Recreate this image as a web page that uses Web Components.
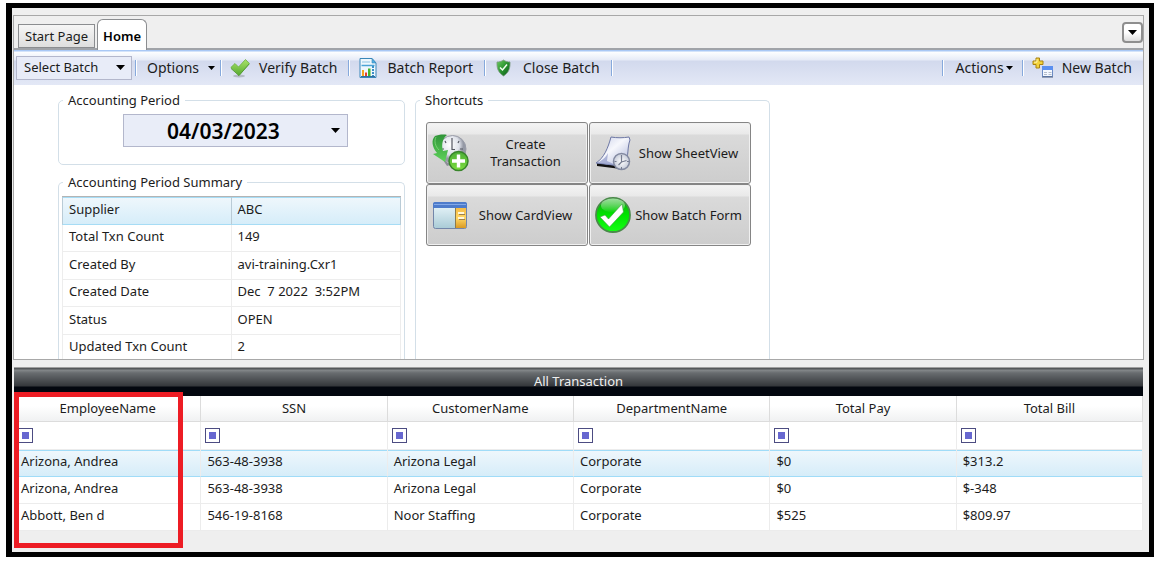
<!DOCTYPE html>
<html lang="en">
<head>
<meta charset="utf-8">
<meta name="viewport" content="width=device-width, initial-scale=1">
<title>Home - Accounting Period</title>
<style>
body {
  background: #fff;
  color: #1c1c1c;
  font: 13px/17px "Noto Sans", "Open Sans", sans-serif;
  margin: 0;
}
</style>
</head>
<body>
<batch-app>
  <tab-strip slot="tabs"></tab-strip>
  <tool-bar slot="toolbar">
    <batch-select></batch-select>
    <tool-button menu>Options</tool-button>
    <tool-button><ui-icon slot="icon" name="verify"></ui-icon>Verify Batch</tool-button>
    <tool-button><ui-icon slot="icon" name="report"></ui-icon>Batch Report</tool-button>
    <tool-button><ui-icon slot="icon" name="shield"></ui-icon>Close Batch</tool-button>
    <tool-button slot="end" menu tight>Actions</tool-button>
    <tool-button slot="end" last><ui-icon slot="icon" name="new"></ui-icon>New Batch</tool-button>
  </tool-bar>
  <group-box label="Accounting Period" slot="period"><period-picker></period-picker></group-box>
  <group-box label="Accounting Period Summary" slot="summary"><summary-table></summary-table></group-box>
  <group-box label="Shortcuts" slot="shortcuts">
    <shortcut-grid>
      <shortcut-button><ui-icon slot="icon" name="create"></ui-icon>Create Transaction</shortcut-button>
      <shortcut-button><ui-icon slot="icon" name="sheet"></ui-icon>Show SheetView</shortcut-button>
      <shortcut-button><ui-icon slot="icon" name="card"></ui-icon>Show CardView</shortcut-button>
      <shortcut-button><ui-icon slot="icon" name="form"></ui-icon>Show Batch Form</shortcut-button>
    </shortcut-grid>
  </group-box>
  <transaction-grid slot="grid"></transaction-grid>
</batch-app>

<script>
const ICONS = {
  arrow: [9, 5, '<path d="M0 0h9L4.500 5z" fill="#000"/>'],
  verify: [20, 20, `
    <defs><linearGradient id="g" x2="0" y2="1"><stop stop-color="#a9e368"/><stop offset="1" stop-color="#56aa30"/></linearGradient></defs>
    <ellipse cx="9" cy="18" rx="6" ry="1.500" fill="#9aa0a8" opacity=".6"/>
    <path d="M.8 9.500L5 5.500l3.500 3.500L15.500 1.500l3.900 4L9 17.500z" fill="url(#g)" stroke="#6bb043" stroke-width=".8" stroke-linejoin="round"/>
    <path d="M1 10.500L9 17.500 19.200 6" fill="none" stroke="#4a9429" stroke-width=".8" stroke-linejoin="round"/>`],
  report: [18, 20, `
    <path d="M1 .5h12L17 5v14.500H1z" fill="#eef7fd" stroke="#3a87b8"/>
    <path d="M13 .5V5h4z" fill="#4fb0e4" stroke="#3a87b8" stroke-width=".6"/>
    <path d="M3 4h8" stroke="#8fc3e4"/>
    <path d="M2.500 7.500h13" stroke="#4aa3d6" stroke-width="1.500"/>
    <path d="M14 8v10" stroke="#3b8fc7" stroke-width="2" stroke-dasharray="2 1"/>
    <path d="M3 12h2v6H3z" fill="#f5a51d"/><path d="M6 14.500h2V18H6z" fill="#e8402c"/><path d="M9 10.500h2.500V18H9z" fill="#46b52c"/>
    <path d="M2 18.500h14" stroke="#2f6f9f"/>`],
  shield: [15, 18, `
    <defs><linearGradient id="g" x2="1" y2="1"><stop stop-color="#6fce62"/><stop offset=".5" stop-color="#2a9330"/><stop offset="1" stop-color="#0b5a1a"/></linearGradient></defs>
    <path d="M7.500 1C9.500 2.500 12 3 14 3c.3 6-1 10.500-6.500 14C2 13.500.7 9 1 3c2 0 4.500-.5 6.500-2z" fill="url(#g)" stroke="#7f9a84" stroke-width=".8"/>
    <path d="M4 8.500L6.500 11 11 5.500" fill="none" stroke="#f4fff4" stroke-width="1.500"/>`],
  new: [21, 21, `
    <path d="M4 1h3.500v3H11v3.500H7.500V11H4V7.500H1V4h3z" fill="#f3d33c" stroke="#a98212"/>
    <path d="M5 2.200v3H2.200" fill="none" stroke="#fff6ae"/>
    <path d="M10.500 9.500h10v10h-10z" fill="#f4f8ff" stroke="#6c8cc4"/>
    <path d="M10 9h11v4H10z" fill="#5b8ff0"/>
    <path d="M12 15h3v1h-3zM16.500 15h3v1h-3zM12 17h3v1h-3zM16.500 17h3v1h-3z" fill="#b3bccb"/>
    <path d="M10 20h11" stroke="#4b5d7d"/>`],
  create: [38, 38, `
    <defs>
      <radialGradient id="a" cx=".4" cy=".35"><stop stop-color="#fff"/><stop offset=".7" stop-color="#dfe2ea"/><stop offset="1" stop-color="#9599a5"/></radialGradient>
      <linearGradient id="b" x2="0" y2="1"><stop stop-color="#2f9438"/><stop offset="1" stop-color="#5fd35b"/></linearGradient>
      <linearGradient id="c" x2="0" y2="1"><stop stop-color="#4cae38"/><stop offset="1" stop-color="#7bdc3d"/></linearGradient>
    </defs>
    <path d="M8 20l9 9 14-13-3 12-12 4z" fill="#8c8e98"/>
    <circle cx="21.500" cy="15" r="13.500" fill="url(#a)" stroke="#999ca8"/>
    <path d="M21 4v12M21 15.500h3M11 15h2M29 15h3M14 7l1 2M28 7l-1 2" stroke="#555862" stroke-width="1.200"/>
    <path d="M16 1C12 4 10 10 12 17l5-1-3 12L2 20l4-1C1 13 0 6 4 2c3-1 8-2 12-1z" fill="url(#b)"/>
    <path d="M5 3c-2 4-1 9 3 13" fill="none" stroke="#8be184" opacity=".7"/>
    <circle cx="27.500" cy="27" r="9.500" fill="url(#c)" stroke="#38852b" stroke-width="1.500"/>
    <path d="M27.500 20.500v13M21 27h13" stroke="#fff" stroke-width="3.400"/>`],
  sheet: [38, 38, `
    <defs>
      <linearGradient id="a" x2="1" y2="1"><stop stop-color="#c4cbe6"/><stop offset=".45" stop-color="#f6f7fc"/><stop offset="1" stop-color="#a9b2d8"/></linearGradient>
      <radialGradient id="b"><stop stop-color="#fff"/><stop offset="1" stop-color="#c6cbd9"/></radialGradient>
    </defs>
    <path d="M3 29l24 3v3L3 32z" fill="#111"/>
    <path d="M17 3c6 1 12 1 18 0l1 3c-3 8-1 16-5 23l-4 3L2 29c8-5 12-15 15-26z" fill="url(#a)" stroke="#6d77a4"/>
    <path d="M2 29c6-2 10-6 12-10l-1 8 11 5z" fill="#8f99c8" opacity=".7"/>
    <circle cx="27.500" cy="27.500" r="8" fill="url(#b)" stroke="#8289a0" stroke-width="1.500"/>
    <path d="M27.500 21v7l5-1.500M27.500 28l-3 3" fill="none" stroke="#777d91" stroke-width="1.200"/>
    <path d="M20.500 27.500h2M27.500 33v2M33 27.500h2" stroke="#777d91"/>`],
  card: [38, 38, `
    <defs>
      <linearGradient id="a" x2="0" y2="1"><stop stop-color="#eef9fd"/><stop offset="1" stop-color="#a9cbd6"/></linearGradient>
      <linearGradient id="b" x2="0" y2="1"><stop stop-color="#f5bb45"/><stop offset=".5" stop-color="#ffd765"/><stop offset="1" stop-color="#d99a25"/></linearGradient>
    </defs>
    <rect x="2.500" y="6.500" width="33" height="26" rx="2" fill="url(#a)" stroke="#7386a9"/>
    <path d="M2 8q0-2 2-2h30q2 0 2 2v4H2z" fill="#4e7ccb"/>
    <path d="M3 8.500h32" stroke="#83a9e8"/>
    <path d="M25 12h10v20H25z" fill="url(#b)"/>
    <path d="M24.500 12v20" stroke="#8c7b4d"/>
    <path d="M27 17h6M27 22h6" stroke="#fff8dc" stroke-width="2"/>
    <path d="M28 18.500h6M28 23.500h6" stroke="#9b8150"/>`],
  form: [38, 38, `
    <defs>
      <linearGradient id="a" x2="0" y2="1"><stop stop-color="#13a313"/><stop offset=".5" stop-color="#00e400"/><stop offset="1" stop-color="#15ff15"/></linearGradient>
      <linearGradient id="b" x2="0" y2="1"><stop stop-color="#b8f0b8"/><stop offset="1" stop-color="#fff" stop-opacity="0"/></linearGradient>
    </defs>
    <circle cx="19" cy="19" r="17" fill="url(#a)" stroke="#4a8a4a" stroke-width="1.800"/>
    <ellipse cx="19" cy="9.500" rx="12" ry="7" fill="url(#b)" opacity=".8"/>
    <path d="M6 21l5-2 3.500 4L28 8l1.500 8L15.500 31z" fill="#fff" stroke="#3f9c3f" stroke-width=".6"/>`],
};

function define(name, html, setup) {
  const template = document.createElement('template');
  template.innerHTML = html;
  customElements.define(name, class extends HTMLElement {
    constructor() {
      super();
      this.attachShadow({mode: 'open'});
      this.shadowRoot.appendChild(template.content.cloneNode(true));
    }
    connectedCallback() {
      if (setup) setup(this, this.shadowRoot);
    }
  });
}

define('ui-icon', `
<style>
:host { display: flex; flex: none; justify-content: center; }
svg { display: block; }
</style>
<svg aria-hidden="true"></svg>`, (host, root) => {
  const [width, height, shapes] = ICONS[host.getAttribute('name')];
  const svg = root.querySelector('svg');
  svg.setAttribute('width', width);
  svg.setAttribute('height', height);
  svg.setAttribute('viewBox', `0 0 ${width} ${height}`);
  svg.innerHTML = shapes;
});

define('batch-app', `
<style>
:host {
  background: #efefef;
  border: 5px solid #000;
  border-left-width: 6px;
  box-sizing: border-box;
  display: flex;
  flex-direction: column;
  gap: 7px;
  height: calc(100vh - 9px);
  margin: 3px 6px 6px;
  overflow: hidden;
  padding: 7px 5px 21px 1px;
}
main {
  border: 1px solid #a8a8a8;
  display: flex;
  flex: 1;
  flex-direction: column;
  min-height: 0;
}
.content {
  align-items: stretch;
  background: #fff;
  display: flex;
  flex: 1;
  gap: 10px;
  min-height: 0;
  overflow: hidden;
  padding: 7px 8px 0 44px;
}
.left {
  display: flex;
  flex: 0 1 347px;
  flex-direction: column;
  gap: 9px;
}
.right {
  display: flex;
  flex: 0 1 355px;
}
</style>
<main>
  <slot name="tabs"></slot>
  <slot name="toolbar"></slot>
  <div class="content">
    <div class="left"><slot name="period"></slot><slot name="summary"></slot></div>
    <div class="right"><slot name="shortcuts"></slot></div>
  </div>
</main>
<slot name="grid"></slot>`);

define('tab-strip', `
<style>
:host {
  align-items: flex-end;
  border-bottom: 2px solid #a0a3a8;
  display: flex;
  flex: none;
  height: 32px;
  padding: 0 0 0 4px;
}
nav { align-items: flex-end; display: flex; flex: 1; gap: 2px; }
a {
  border: 1px solid #8b8d90;
  box-sizing: border-box;
  color: inherit;
  padding: 3px 6px;
  text-decoration: none;
}
a.other {
  background: linear-gradient(#f6f6f6, #dedede);
  height: 24px;
}
a.current {
  background: #fff;
  border-bottom: 0;
  border-radius: 6px 6px 0 0;
  color: #000;
  font-weight: 600;
  height: 31px;
  margin-bottom: -2px;
  padding: 8px 5px 4px;
}
button {
  align-items: center;
  align-self: center;
  background: linear-gradient(#fff 50%, #ddd);
  border: 2px solid #8e8e8e;
  border-radius: 4px;
  display: flex;
  height: 21px;
  justify-content: center;
  padding: 0;
  width: 21px;
}
</style>
<nav aria-label="Pages">
  <a class="other" href="#start">Start Page</a>
  <a class="current" href="#home" aria-current="page">Home</a>
</nav>
<button type="button" aria-label="Page list"><ui-icon name="arrow"></ui-icon></button>`);

define('tool-bar', `
<style>
:host {
  background: linear-gradient(#a9c8f5 0 1px, #fdfeff 2px, #e6ebf7 10px, #d2d9ed 11px, #e3e8f6);
  display: flex;
  flex: none;
  height: 35px;
  justify-content: space-between;
}
div { align-items: center; display: flex; white-space: nowrap; }
.start { padding-left: 2px; }
.end::before {
  background: #86a9dc;
  box-shadow: 1px 0 #fff;
  content: "";
  height: 16px;
  width: 1px;
}
</style>
<div class="start" role="toolbar" aria-label="Batch"><slot></slot></div>
<div class="end" role="toolbar" aria-label="More"><slot name="end"></slot></div>`);

define('batch-select', `
<style>
:host { align-items: center; display: flex; gap: 3px; }
:host::after {
  background: #86a9dc;
  box-shadow: 1px 0 #fff;
  content: "";
  height: 16px;
  width: 1px;
}
label { align-items: center; display: grid; }
select, ui-icon { grid-area: 1 / 1; }
select {
  appearance: none;
  background: #e8ecf8;
  border: 1px solid #b3b7cc;
  border-radius: 0;
  color: inherit;
  font: inherit;
  height: 24px;
  padding: 0 8px 0 7px;
  width: 116px;
}
ui-icon { justify-self: end; margin-right: 7px; pointer-events: none; }
</style>
<label>
  <select aria-label="Batch"><option>Select Batch</option></select>
  <ui-icon name="arrow"></ui-icon>
</label>`);

define('tool-button', `
<style>
:host { align-items: center; display: flex; }
:host::after {
  background: #86a9dc;
  box-shadow: 1px 0 #fff;
  content: "";
  height: 16px;
  width: 1px;
}
:host([last])::after { content: none; }
button {
  align-items: center;
  background: none;
  border: 0;
  color: inherit;
  display: flex;
  font: inherit;
  font-size: 14px;
  gap: 9px;
  padding: 0 11px 0 9px;
}
::slotted(ui-icon) { min-width: 20px; }
:host([menu]) button { padding: 0 5px 0 11px; }
:host([tight]) button { gap: 2px; padding: 0 9px 0 13px; }
:host([last]) button { padding: 0 11px 0 9px; }
svg { display: none; }
:host([menu]) svg { display: block; }
</style>
<button type="button">
  <slot name="icon"></slot>
  <span><slot></slot></span>
  <svg width="7" height="4" viewBox="0 0 7 4" aria-hidden="true"><path d="M0 0h7L3.500 4z"/></svg>
</button>`);

define('group-box', `
<style>
:host { display: block; flex: 1; }
fieldset {
  border: 1px solid #d3dfe8;
  border-radius: 5px;
  box-sizing: border-box;
  height: 100%;
  margin: 0;
  min-width: 0;
  padding: 5px 18px 17px 10px;
}
legend { margin-left: -6px; padding: 0 5px; }
:host([slot="period"]) { flex: none; }
:host([slot="summary"]) fieldset { padding: 5px 3px; }
:host([slot="summary"]) legend { margin-left: 1px; }
:host([slot="summary"]) fieldset,
:host([slot="shortcuts"]) fieldset {
  border-bottom: 0;
  border-radius: 5px 5px 0 0;
}
:host([slot="shortcuts"]) fieldset { padding-top: 13px; }
</style>
<fieldset>
  <legend></legend>
  <slot></slot>
</fieldset>`, (host, root) => {
  root.querySelector('legend').textContent = host.getAttribute('label');
});

define('period-picker', `
<style>
:host { display: flex; justify-content: center; padding-left: 16px; }
label { align-items: center; display: grid; flex: 0 1 225px; }
select, ui-icon { grid-area: 1 / 1; }
select {
  appearance: none;
  background: #e9edf8;
  border: 1px solid #b3b7cc;
  border-radius: 0;
  color: #000;
  font: 600 21px/24px "Noto Sans", "Open Sans", sans-serif;
  height: 33px;
  padding: 0 40px 0 43px;
  width: 100%;
}
ui-icon { justify-self: end; margin-right: 8px; pointer-events: none; }
</style>
<label>
  <select aria-label="Accounting period"><option>04/03/2023</option></select>
  <ui-icon name="arrow"></ui-icon>
</label>`);

define('summary-table', `
<style>
:host { display: block; }
table {
  border-collapse: separate;
  border-spacing: 0;
  border-top: 1px solid #b4b4b4;
  height: 166px;
  table-layout: fixed;
  width: 100%;
}
th, td {
  border: solid #ededed;
  border-width: 0 1px 1px 0;
  font-weight: normal;
  padding: 0 6px 2px;
  text-align: left;
  white-space: pre;
}
th { border-left-width: 1px; }
tr:first-child > * {
  background: linear-gradient(#eff7fc, #d6edf9);
  border-color: #b9cbd6;
  border-bottom-color: #a6dcf5;
  box-shadow: inset 0 1px #a6dcf5;
}
</style>
<table>
  <tbody>
    <tr><th scope="row">Supplier</th><td>ABC</td></tr>
    <tr><th scope="row">Total Txn Count</th><td>149</td></tr>
    <tr><th scope="row">Created By</th><td>avi-training.Cxr1</td></tr>
    <tr><th scope="row">Created Date</th><td>Dec  7 2022  3:52PM</td></tr>
    <tr><th scope="row">Status</th><td>OPEN</td></tr>
    <tr><th scope="row">Updated Txn Count</th><td>2</td></tr>
  </tbody>
</table>`);

define('shortcut-grid', `
<style>
:host {
  display: grid;
  gap: 0 1px;
  grid-template-columns: 1fr 1fr;
}
</style>
<slot></slot>`);

define('shortcut-button', `
<style>
:host { display: block; }
button {
  align-items: center;
  background: linear-gradient(#f4f4f4, #e9e9e9 11px, #dadada 12px, #cdcdcd);
  border: 1px solid #858585;
  border-radius: 3px;
  box-shadow: inset 0 0 0 1px #f0f0f0;
  color: inherit;
  display: flex;
  font: inherit;
  height: 62px;
  padding: 0 5px 0 4px;
  width: 100%;
}
span { flex: 1; }
</style>
<button type="button"><slot name="icon"></slot><span><slot></slot></span></button>`);

define('transaction-grid', `
<style>
:host { display: block; flex: none; margin: 0 1px; position: relative; }
table {
  border-collapse: separate;
  border-spacing: 0;
  table-layout: fixed;
  width: 100%;
}
caption {
  background: linear-gradient(#55585a 0 1px, #85898b 2px, #686c6f 5px, #34373b 18px, #03070f 19px);
  border-top: 1px solid #a0a0a0;
  box-sizing: border-box;
  color: #f0f0f0;
  height: 29px;
  padding-top: 5px;
}
.name { width: 16.6%; }
.department { width: 17.4%; }
th, td {
  border: solid #ececec;
  border-width: 0 1px 1px 0;
  box-sizing: border-box;
  font-weight: normal;
  padding: 0 6px;
  text-align: left;
}
th:first-child, td:first-child { padding-left: 7px; }
thead tr:first-child th {
  background: linear-gradient(#fff 10px, #f0f1f2);
  border-color: #dcdcdc;
  height: 26px;
  text-align: center;
}
.filters td { background: #fff; height: 28px; padding: 0 4px; }
tbody td { background: #fff; height: 27px; padding-bottom: 3px; }
tbody tr:first-child td {
  background: linear-gradient(#eff7fc, #d6edf9);
  border-bottom-color: #a0dcf8;
  box-shadow: inset 0 1px #a0dcf8;
}
button {
  background: #6767d0;
  border: 1px solid #4c4c82;
  box-shadow: inset 0 0 0 3px #fff;
  display: block;
  height: 15px;
  padding: 0;
  width: 15px;
}
.marker {
  border: 5px solid #ed1c24;
  bottom: -17px;
  box-sizing: border-box;
  left: 0;
  pointer-events: none;
  position: absolute;
  top: 25px;
  width: 15%;
}
</style>
<table>
  <caption>All Transaction</caption>
  <colgroup><col class="name"><col><col><col class="department"><col><col></colgroup>
  <thead><tr></tr><tr class="filters"></tr></thead>
  <tbody></tbody>
</table>
<div class="marker"></div>`, (host, root) => {
  const columns = ['EmployeeName', 'SSN', 'CustomerName', 'DepartmentName', 'Total Pay', 'Total Bill'];
  const rows = [
    ['Arizona, Andrea', '563-48-3938', 'Arizona Legal', 'Corporate', '$0', '$313.2'],
    ['Arizona, Andrea', '563-48-3938', 'Arizona Legal', 'Corporate', '$0', '$-348'],
    ['Abbott, Ben d', '546-19-8168', 'Noor Staffing', 'Corporate', '$525', '$809.97'],
  ];
  const [head, filters] = root.querySelectorAll('thead tr');
  head.innerHTML = columns.map((name) => `<th scope="col">${name}</th>`).join('');
  filters.innerHTML = columns.map((name) => `<td><button type="button" aria-label="Filter ${name}"></button></td>`).join('');
  root.querySelector('tbody').innerHTML = rows
    .map((row) => `<tr>${row.map((cell) => `<td>${cell}</td>`).join('')}</tr>`)
    .join('');
});
</script>
</body>
</html>
